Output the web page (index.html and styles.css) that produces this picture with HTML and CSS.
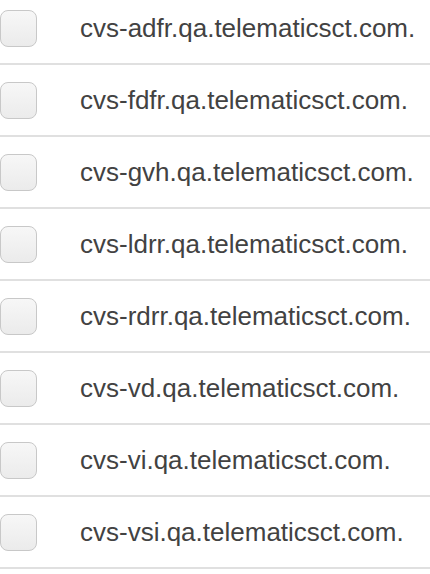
FILE: index.html
```html
<!DOCTYPE html>
<html>
<head>
<meta charset="utf-8">
<link rel="stylesheet" href="styles.css">
</head>
<body>
<ul class="list">
  <li class="row"><span class="box"></span><span class="label">cvs-adfr.qa.telematicsct.com.</span></li>
  <li class="row"><span class="box"></span><span class="label">cvs-fdfr.qa.telematicsct.com.</span></li>
  <li class="row"><span class="box"></span><span class="label">cvs-gvh.qa.telematicsct.com.</span></li>
  <li class="row"><span class="box"></span><span class="label">cvs-ldrr.qa.telematicsct.com.</span></li>
  <li class="row"><span class="box"></span><span class="label">cvs-rdrr.qa.telematicsct.com.</span></li>
  <li class="row"><span class="box"></span><span class="label">cvs-vd.qa.telematicsct.com.</span></li>
  <li class="row"><span class="box"></span><span class="label">cvs-vi.qa.telematicsct.com.</span></li>
  <li class="row"><span class="box"></span><span class="label">cvs-vsi.qa.telematicsct.com.</span></li>
</ul>
</body>
</html>
```
FILE: styles.css
```css
html, body {
  margin: 0;
  padding: 0;
  background: #ffffff;
  overflow: hidden;
}
.list {
  list-style: none;
  margin: -7px 0 0 0;
  padding: 0;
}
.row {
  display: flex;
  align-items: center;
  height: 70px;
  border-bottom: 2px solid #e0e0e0;
  gap: 43px;
}
.box {
  flex: none;
  box-sizing: border-box;
  width: 37px;
  height: 37px;
  border: 1.5px solid #c8c8c8;
  border-radius: 8px;
  background: linear-gradient(#f7f7f7, #ebebeb);
}
.label {
  font-family: "Liberation Sans", Arial, sans-serif;
  font-size: 26px;
  color: #424242;
  white-space: nowrap;
}
```
